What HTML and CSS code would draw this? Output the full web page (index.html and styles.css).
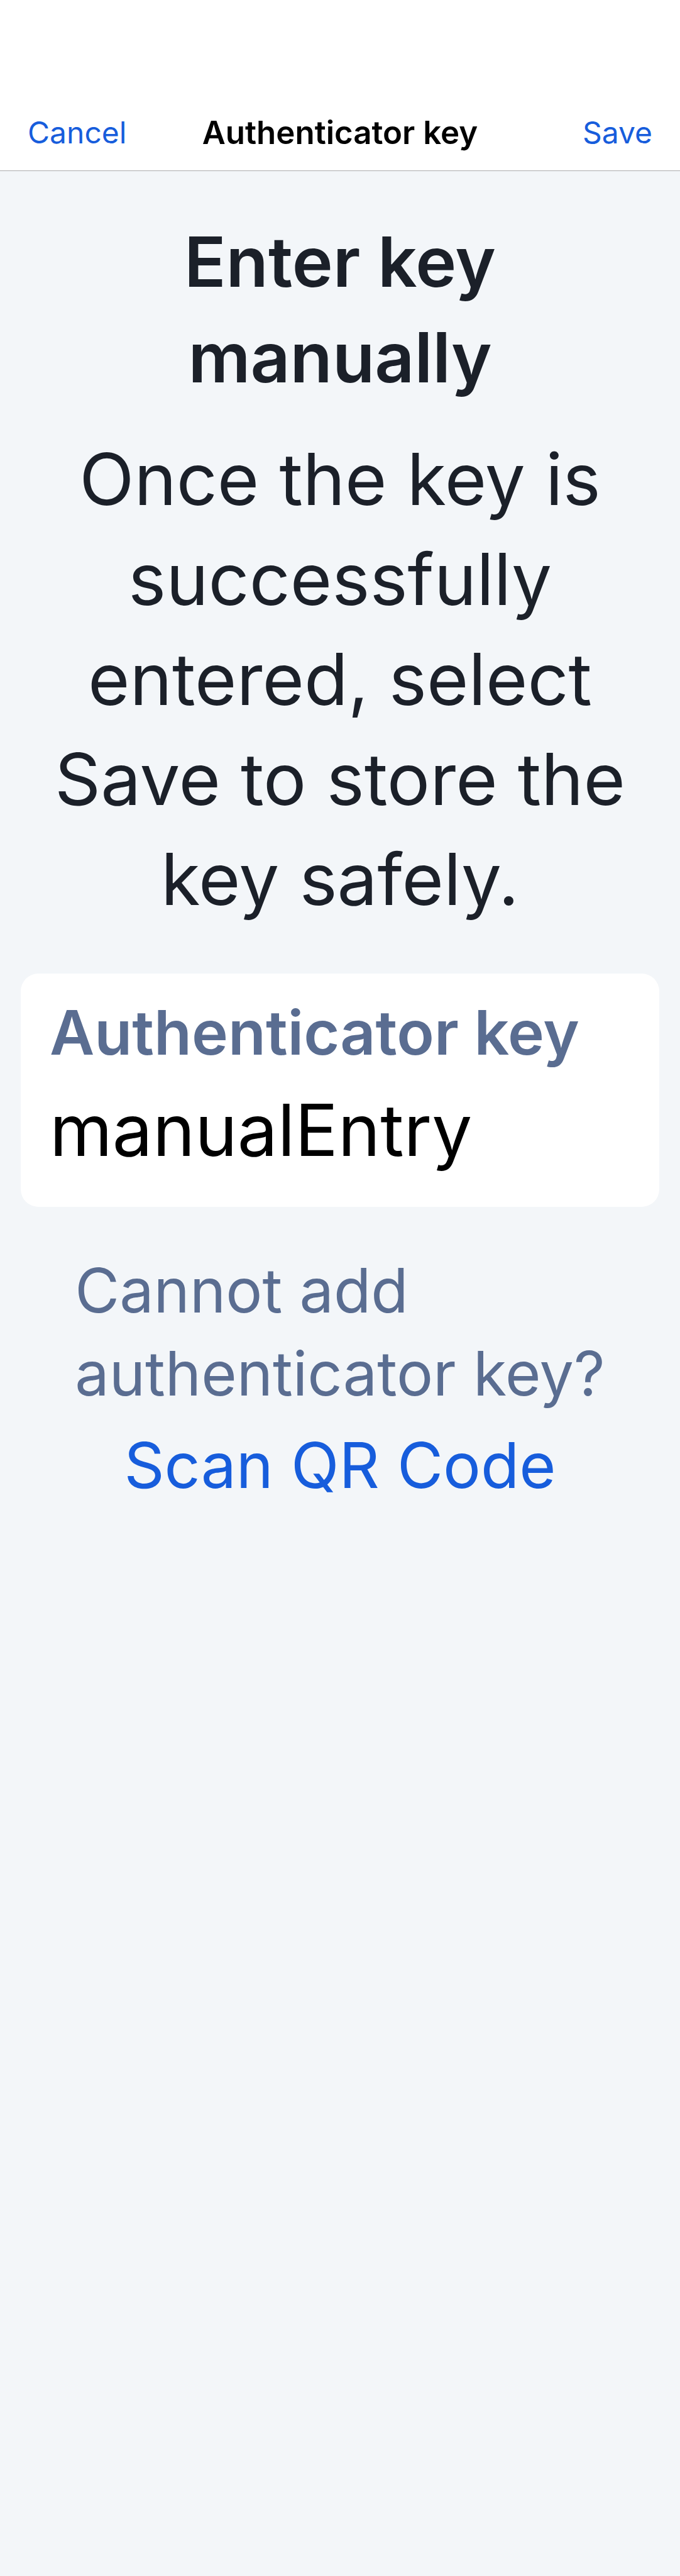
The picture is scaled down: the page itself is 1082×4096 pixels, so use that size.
FILE: index.html
```html
<!DOCTYPE html>
<html lang="en">
<head>
<meta charset="utf-8">
<meta name="viewport" content="width=device-width, initial-scale=1">
<title>Authenticator key</title>
<link rel="stylesheet" href="styles.css">
</head>
<body>
<header class="navbar">
  <button class="nav-button" type="button">Cancel</button>
  <h1 class="nav-title">Authenticator key</h1>
  <button class="nav-button nav-save" type="submit" form="key-form">Save</button>
</header>
<main class="content">
  <section class="intro">
    <h2 class="heading">Enter key<br>manually</h2>
    <p class="description">Once the key is<br>successfully<br>entered, select<br>Save to store the<br>key safely.</p>
  </section>
  <form class="card" id="key-form">
    <label class="field-label" for="key">Authenticator key</label>
    <input class="field-input" id="key" type="text" value="manualEntry">
  </form>
  <section class="help">
    <p class="help-text">Cannot add<br>authenticator key?</p>
    <button class="help-button" type="button">Scan QR Code</button>
  </section>
</main>
</body>
</html>
```

FILE: styles.css
```css
* {
  box-sizing: border-box;
}

body {
  margin: 0;
  min-height: 100vh;
  background: #f3f6f9;
  color: #1b2029;
  font-family: Inter, "Liberation Sans", sans-serif;
}

h1,
h2,
p {
  margin: 0;
}

button,
input {
  padding: 0;
  border: 0;
  background: none;
  font-family: inherit;
}

.navbar {
  display: grid;
  grid-template-columns: 1fr auto 1fr;
  align-items: center;
  padding: 180px 44px 29px;
  border-bottom: 1px solid #acacae;
  background: #fff;
}

.nav-button {
  justify-self: start;
  color: #175ddc;
  font-size: 48px;
  line-height: 62px;
}

.nav-save {
  justify-self: end;
}

.nav-title {
  color: #000;
  font-size: 51px;
  font-weight: 600;
  line-height: 62px;
}

.content {
  display: flex;
  flex-direction: column;
  gap: 67px;
  padding: 68px 33px;
}

.intro {
  display: flex;
  flex-direction: column;
  gap: 38px;
  padding-bottom: 4px;
  text-align: center;
}

.heading {
  font-size: 110px;
  font-weight: 600;
  line-height: 152px;
}

.description {
  font-size: 114px;
  line-height: 159px;
}

.card {
  display: flex;
  flex-direction: column;
  gap: 23px;
  padding: 34px 46px 50px;
  border-radius: 28px;
  background: #fff;
}

.field-label {
  color: #5a6d91;
  font-size: 98px;
  font-weight: 600;
  line-height: 120px;
}

.field-input {
  width: 100%;
  height: 144px;
  outline: 0;
  color: #000;
  font-size: 114px;
  line-height: 144px;
}

.help {
  display: flex;
  flex-direction: column;
  align-items: center;
  gap: 14px;
}

.help-text {
  color: #5a6d91;
  font-size: 97px;
  line-height: 132px;
}

.help-button {
  color: #175ddc;
  font-size: 100px;
  line-height: 132px;
}
```
